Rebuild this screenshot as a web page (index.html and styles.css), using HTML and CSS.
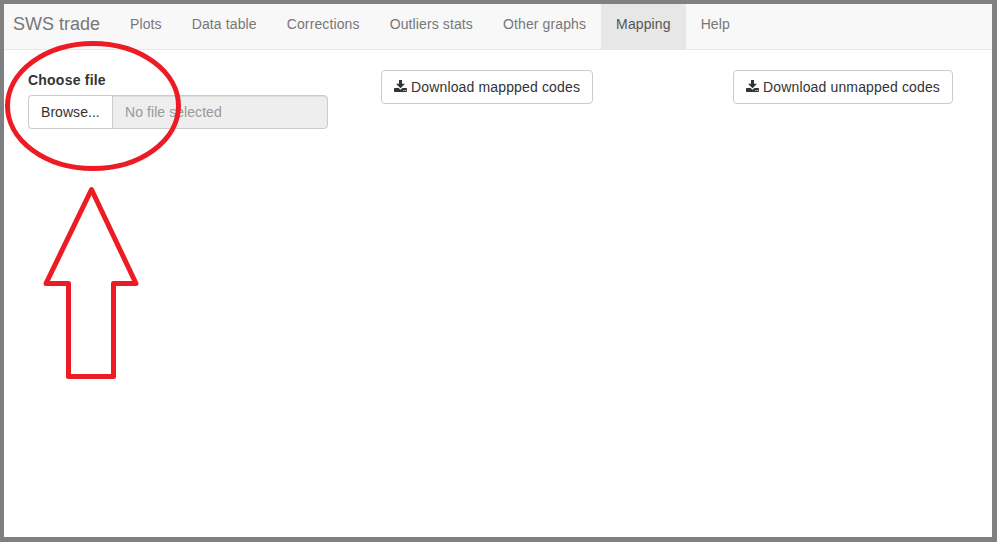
FILE: index.html
```
<!DOCTYPE html>
<html lang="en">
<head>
<meta charset="utf-8">
<title>SWS trade</title>
<link rel="stylesheet" href="styles.css">
</head>
<body>
<div class="window">
  <nav class="navbar">
    <a class="brand">SWS trade</a>
    <a class="tab">Plots</a>
    <a class="tab">Data table</a>
    <a class="tab">Corrections</a>
    <a class="tab">Outliers stats</a>
    <a class="tab">Other graphs</a>
    <a class="tab active">Mapping</a>
    <a class="tab">Help</a>
  </nav>
  <main class="row">
    <div class="col">
      <label class="label">Choose file</label>
      <div class="file-input">
        <span class="browse">Browse...</span>
        <span class="file-name">No file selected</span>
      </div>
    </div>
    <div class="col">
      <a class="btn"><svg class="icon" viewBox="0 0 13 12"><path d="M5 0H8V3.7H11L6.5 8.2L2 3.7H5Z"/><path fill-rule="evenodd" d="M.7 8H4.6L6.5 9.7L8.4 8H12.3Q13 8 13 8.7V11.3Q13 12 12.3 12H.7Q0 12 0 11.3V8.7Q0 8 .7 8ZM9.4 10V11H10.3V10ZM11.3 10V11H12.2V10Z"/></svg><span>Download mappped codes</span></a>
    </div>
    <div class="col">
      <a class="btn"><svg class="icon" viewBox="0 0 13 12"><path d="M5 0H8V3.7H11L6.5 8.2L2 3.7H5Z"/><path fill-rule="evenodd" d="M.7 8H4.6L6.5 9.7L8.4 8H12.3Q13 8 13 8.7V11.3Q13 12 12.3 12H.7Q0 12 0 11.3V8.7Q0 8 .7 8ZM9.4 10V11H10.3V10ZM11.3 10V11H12.2V10Z"/></svg><span>Download unmapped codes</span></a>
    </div>
  </main>
</div>
<svg class="annotation" viewBox="0 0 997 543">
  <ellipse cx="93" cy="106" rx="85.5" ry="62.5"/>
  <path d="M91.5 189.5L136 283.5H113.5V376.5H68.5V283.5H46Z"/>
</svg>
</body>
</html>
```
FILE: styles.css
```
* {
  box-sizing: border-box;
}

body {
  margin: 0;
  background: #fff;
  color: #333;
  font: 14px/20px "Liberation Sans", Arial, sans-serif;
}

.window {
  height: 542px;
  border: solid #808080;
  border-width: 4px 5px 5px 4px;
  background: #fff;
}

.navbar {
  display: flex;
  height: 46px;
  padding-left: 9px;
  background: #f8f8f8;
  border-bottom: 1px solid #e7e7e7;
  color: #777;
  white-space: nowrap;
}

.brand {
  width: 102px;
  padding: 10px 0;
  font-size: 18px;
}

.tab {
  padding: 10px 15px 15px;
  letter-spacing: 0.118px;
}

.tab.active {
  height: 46px;
  background: #e7e7e7;
  color: #555;
}

.row {
  display: grid;
  grid-template-columns: 353px 352px 1fr;
  padding: 20px 0 0 24px;
}

.label {
  display: block;
  margin-bottom: 5px;
  font-weight: bold;
  letter-spacing: 0.22px;
}

.file-input {
  display: flex;
  width: 300px;
  height: 34px;
}

.browse {
  width: 84px;
  padding: 6px 0 6px 12px;
  border: 1px solid #ccc;
  border-right: 0;
  border-radius: 4px 0 0 4px;
  letter-spacing: 0.05px;
}

.file-name {
  flex: 1;
  padding: 6px 12px;
  border: 1px solid #ccc;
  border-radius: 0 4px 4px 0;
  background: #eee;
  box-shadow: inset 0 1px 1px rgba(0, 0, 0, 0.075);
  color: #999;
  letter-spacing: 0.07px;
}

.btn {
  display: inline-flex;
  gap: 4px;
  height: 34px;
  padding: 6px 12px;
  border: 1px solid #ccc;
  border-radius: 4px;
  letter-spacing: 0.15px;
  white-space: nowrap;
}

.icon {
  width: 13px;
  height: 12px;
  margin-top: 3px;
  fill: #333;
}

.annotation {
  position: absolute;
  top: 0;
  left: 0;
  width: 997px;
  height: 543px;
  fill: none;
  stroke: #ed1c24;
  stroke-width: 5;
  stroke-linejoin: round;
  pointer-events: none;
}
```
